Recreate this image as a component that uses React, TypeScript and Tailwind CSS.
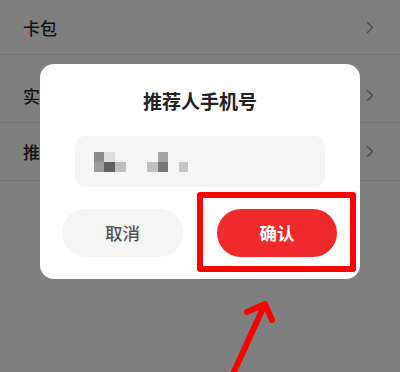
import React from "react";

const rows = [
  { label: "卡包", h: "h-[55px]", pt: "pt-[17px]" },
  { label: "实名认证", h: "h-[68px]", pt: "pt-[30px]" },
  { label: "推荐人", h: "h-[58px]", pt: "pt-[18px]" },
];

function Chevron() {
  return (
    <svg width="8" height="13" viewBox="0 0 8 13" fill="none" className="shrink-0">
      <path d="M1.5 1.5L6.5 6.5L1.5 11.5" stroke="#4d4d4d" strokeWidth="1.5" strokeLinecap="round" strokeLinejoin="round" />
    </svg>
  );
}

// the blurred phone number is a mosaic, drawn as a few gray squares
function Mosaic() {
  return (
    <svg width="96" height="22" viewBox="0 0 96 22" className="blur-[0.4px]">
      <rect x="0" y="0" width="10" height="10" fill="#8c8c8c" />
      <rect x="10" y="0" width="11" height="10" fill="#dedede" />
      <rect x="0" y="10" width="10" height="10" fill="#9a9a9a" />
      <rect x="10" y="10" width="11" height="10" fill="#616161" />
      <rect x="21" y="10" width="11" height="10" fill="#bfbfbf" />
      <rect x="64" y="0" width="10" height="10" fill="#a5a5a5" />
      <rect x="53" y="10" width="11" height="10" fill="#c0c0c0" />
      <rect x="64" y="10" width="10" height="10" fill="#777777" />
      <rect x="85" y="10" width="9" height="10" fill="#c5c5c5" />
    </svg>
  );
}

export default function App() {
  return (
    <div
      className="relative w-[400px] h-[372px] overflow-hidden bg-[#7f7f7f]"
      style={{ fontFamily: '"Noto Sans CJK SC", "Noto Sans", sans-serif' }}
    >
      {/* page behind the dimmed overlay */}
      <div className="flex flex-col">
        {rows.map((r) => (
          <div key={r.label} className={`${r.h} ${r.pt} flex items-start justify-between pl-[23px] pr-[26px] border-b border-[#747474]`}>
            <span className="text-[17px] leading-[22px] font-medium text-[#121212]">{r.label}</span>
            <span className="pt-[4px]">
              <Chevron />
            </span>
          </div>
        ))}
      </div>

      {/* dialog */}
      <div className="absolute left-[40px] top-[64px] w-[320px] h-[215px] rounded-[14px] bg-white flex flex-col items-center pt-[26px]">
        <div className="text-[19px] leading-[22px] font-bold text-[#222]">推荐人手机号</div>
        <div className="mt-[24px] w-[250px] h-[51px] rounded-[10px] bg-[#f5f5f5] pl-[19px] pt-[16px]">
          <Mosaic />
        </div>
        <div className="mt-[22px] w-full flex pl-[22px] gap-[34px]">
          <button className="w-[121px] h-[48px] rounded-full bg-[#f5f5f5] text-[17.5px] font-medium text-[#555]">
            取消
          </button>
          <button className="w-[120px] h-[48px] rounded-full bg-[#ef2a2c] text-[17.5px] font-bold text-white">
            确认
          </button>
        </div>
      </div>

      {/* annotation */}
      <div className="absolute left-[197px] top-[192px] w-[159px] h-[80px] border-[6px] border-[#ff0000] rounded-[3px]" />
      <svg className="absolute left-0 top-0" width="400" height="372" viewBox="0 0 400 372" fill="none">
        <path d="M232 376L264 306" stroke="#ff0000" strokeWidth="6" strokeLinecap="round" />
        <path d="M247 312L265 304L272 320" stroke="#ff0000" strokeWidth="6" strokeLinecap="round" strokeLinejoin="round" />
      </svg>
    </div>
  );
}
